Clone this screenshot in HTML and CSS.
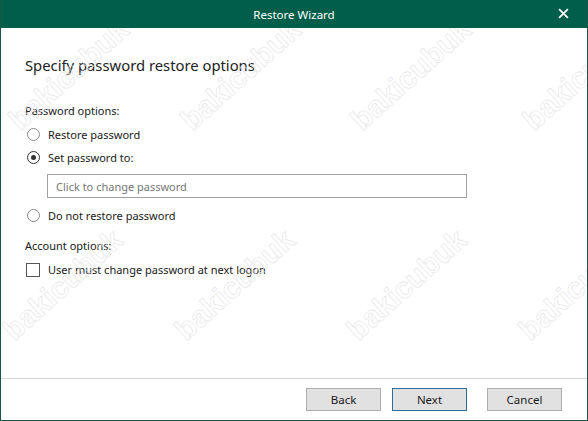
FILE: index.html
```html
<html>
<head>
<link rel="stylesheet" href="styles.css">
</head>
<body>

<div class="window">
  <div class="titlebar">
    <span class="title">Restore Wizard</span>
    <svg class="close" viewBox="0 0 10 10" width="11" height="11">
      <path d="M 1,1 L 9,9 M 9,1 L 1,9" stroke="#fff" stroke-width="1.6" fill="none" />
    </svg>
  </div>

  <div class="content">
    <div class="heading">Specify password restore options</div>

    <div class="group-label">Password options:</div>
    <div class="option">
      <span class="radio"></span>
      <span>Restore password</span>
    </div>
    <div class="option">
      <span class="radio checked"></span>
      <span>Set password to:</span>
    </div>
    <div class="field">Click to change password</div>
    <div class="option">
      <span class="radio"></span>
      <span>Do not restore password</span>
    </div>

    <div class="group-label account">Account options:</div>
    <div class="option">
      <span class="checkbox"></span>
      <span>User must change password at next logon</span>
    </div>
  </div>

  <div class="footer">
    <button class="btn">Back</button>
    <button class="btn default">Next</button>
    <button class="btn cancel">Cancel</button>
  </div>

  <div class="watermarks">
    <span class="mark m1">bakicubuk</span>
    <span class="mark m2">bakicubuk</span>
    <span class="mark m3">bakicubuk</span>
    <span class="mark m4">bakicubuk</span>
    <span class="mark m5">bakicubuk</span>
    <span class="mark m6">bakicubuk</span>
    <span class="mark m7">bakicubuk</span>
    <span class="mark m8">bakicubuk</span>
  </div>
</div>

</body>
</html>
```

FILE: styles.css
```css
body {
  margin: 0;
  font-family: "Noto Sans", "Open Sans", sans-serif;
  font-size: 11px;
  color: #1a1a1a;
}

.window {
  position: relative;
  width: 588px;
  height: 421px;
  box-sizing: border-box;
  border: 1px solid #1b5548;
  border-top: none;
  display: flex;
  flex-direction: column;
  overflow: hidden;
  background: #fff;
}

.titlebar {
  height: 28px;
  margin: 0 -1px;
  background: #005e4a;
  color: #fff;
  display: flex;
  align-items: center;
  justify-content: center;
  position: relative;
}

.title {
  font-size: 11.5px;
}

.close {
  position: absolute;
  right: 19px;
  top: 8px;
}

.content {
  flex: 1;
  padding: 0 24px;
  display: flex;
  flex-direction: column;
}

.heading {
  margin-top: 26px;
  font-size: 14.8px;
  line-height: 22px;
  color: #222;
}

.group-label {
  margin-top: 27px;
  margin-bottom: 4px;
  line-height: 16px;
}

.group-label.account {
  margin-top: 11px;
}

.option {
  display: flex;
  align-items: center;
  gap: 8px;
  height: 23px;
  margin-left: 2px;
}

.radio {
  width: 13px;
  height: 13px;
  border: 1px solid #8c8c8c;
  border-radius: 50%;
  box-sizing: border-box;
  position: relative;
}

.radio.checked {
  border-color: #333;
}

.radio.checked::after {
  content: "";
  position: absolute;
  left: 3px;
  top: 3px;
  width: 5px;
  height: 5px;
  border-radius: 50%;
  background: #333;
}

.checkbox {
  width: 14px;
  height: 14px;
  border: 1px solid #555;
  box-sizing: border-box;
  margin-left: -1px;
}

.field {
  margin: 5px 96px 6px 22px;
  height: 24px;
  border: 1px solid #a0a0a0;
  box-sizing: border-box;
  padding-left: 8px;
  display: flex;
  align-items: center;
  color: #777;
}

.footer {
  height: 42px;
  border-top: 1px solid #d6d6d6;
  display: flex;
  justify-content: flex-end;
  align-items: flex-start;
  padding: 9px 25px 0 0;
  box-sizing: border-box;
}

.btn {
  width: 75px;
  height: 23px;
  background: #e1e1e1;
  border: 1px solid #adadad;
  font-family: "Noto Sans", "Open Sans", sans-serif;
  font-size: 11.5px;
  color: #1a1a1a;
  padding: 0;
  margin-left: 11px;
}

.btn.default {
  border-color: #2c6e9c;
}

.btn.cancel {
  margin-left: 20px;
}

.watermarks {
  position: absolute;
  left: 0;
  top: 28px;
  right: 0;
  bottom: 0;
  overflow: hidden;
  pointer-events: none;
}

.mark {
  position: absolute;
  font-family: "Liberation Sans", sans-serif;
  font-weight: bold;
  font-size: 30px;
  color: transparent;
  -webkit-text-stroke: 0.6px #e4e4e4;
  transform: rotate(-42deg);
  transform-origin: left bottom;
}

.m1 { left: 24px; top: 75px; }
.m2 { left: 196px; top: 75px; }
.m3 { left: 366px; top: 75px; }
.m4 { left: 538px; top: 75px; }
.m5 { left: 18px; top: 285px; }
.m6 { left: 190px; top: 285px; }
.m7 { left: 362px; top: 285px; }
.m8 { left: 534px; top: 285px; }
```
